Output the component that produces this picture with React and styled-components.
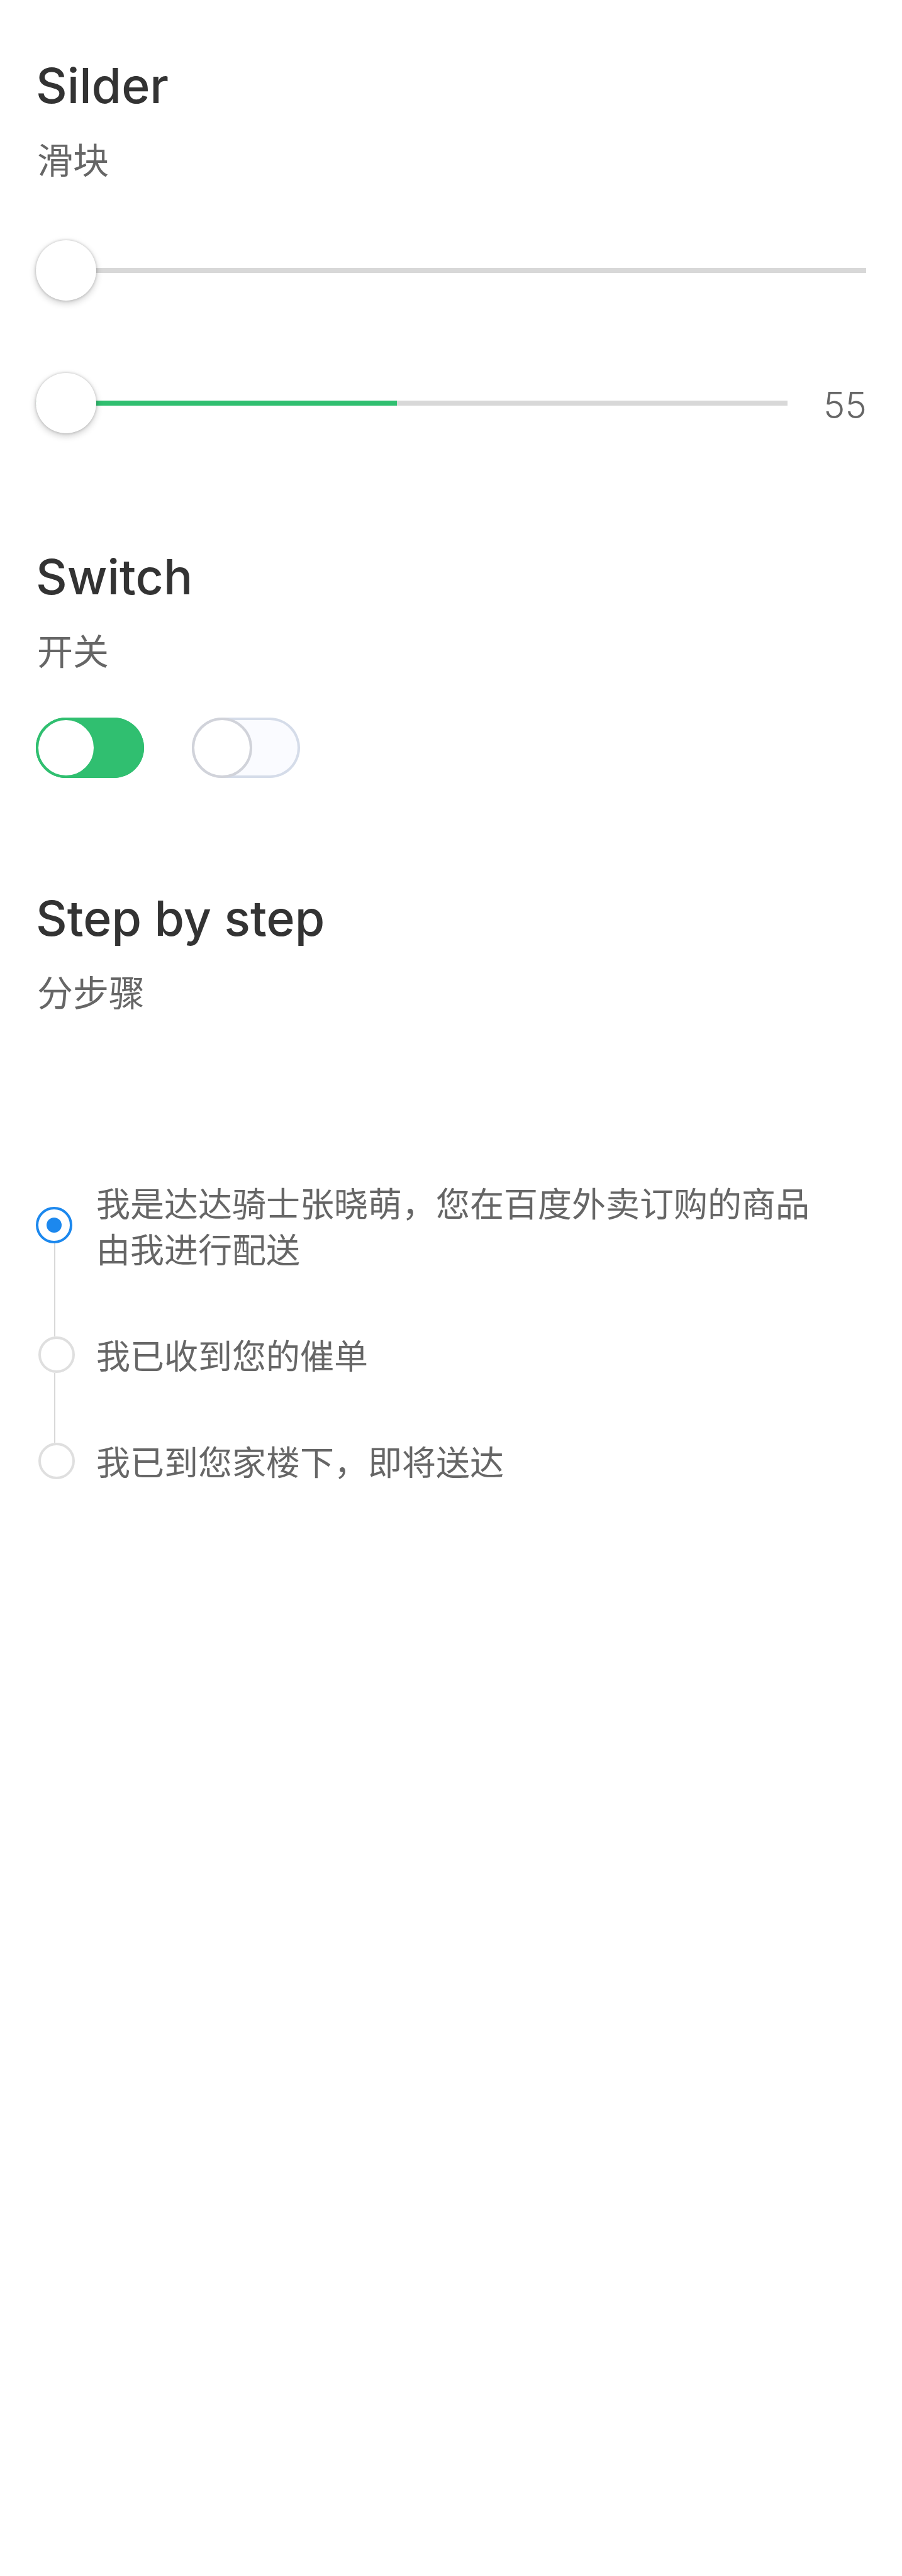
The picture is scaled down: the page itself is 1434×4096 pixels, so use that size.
import React, { useState } from "react";
import styled, { createGlobalStyle } from "styled-components";

const GlobalStyle = createGlobalStyle`
  *, *::before, *::after { box-sizing: border-box; }
  body {
    margin: 0;
    background: #fff;
    color: #666;
    font-family: Inter, "Noto Sans CJK SC", sans-serif;
  }
`;

const Page = styled.main`
  display: flex;
  flex-direction: column;
  min-height: 100vh;
  padding: 88px 57px;
`;

const Section = styled.section`
  margin-bottom: ${(p) => p.$space || 0}px;
`;

const Title = styled.h2`
  margin: 0 0 27px;
  color: #333;
  font-size: 77px;
  font-weight: 500;
  line-height: 96px;
`;

const Subtitle = styled.p`
  margin: 0;
  padding-left: 2px;
  font-family: "Noto Sans CJK SC", sans-serif;
  font-size: 57px;
  font-weight: 400;
  line-height: 80px;
`;

const Sliders = styled.div`
  display: grid;
  gap: 115px;
  margin-top: 91px;
`;

const SliderRow = styled.div`
  display: flex;
  align-items: center;
  gap: 57px;
`;

const Range = styled.input`
  appearance: none;
  flex: 1;
  min-width: 0;
  height: 96px;
  margin: 0;
  background: linear-gradient(to right, #30bf70 ${(p) => p.$fill}%, #d8d8d8 ${(p) => p.$fill}%)
    center / 100% 8px no-repeat;
  cursor: pointer;

  &::-webkit-slider-thumb {
    appearance: none;
    width: 96px;
    height: 96px;
    border: 0;
    border-radius: 50%;
    background: #fff;
    box-shadow: 0 0 4px rgba(0, 0, 0, 0.22), 0 4px 12px rgba(0, 0, 0, 0.2);
  }
`;

const Value = styled.output`
  width: 68px;
  padding-top: 6px;
  font-size: 58px;
  font-weight: 300;
  line-height: 80px;
  text-align: right;
`;

const Switches = styled.div`
  display: flex;
  gap: 76px;
  margin-top: 69px;
`;

const Toggle = styled.button`
  display: flex;
  width: 172px;
  height: 96px;
  padding: 0;
  border: 0;
  border-radius: 48px;
  background: ${(p) => (p.$on ? "#30bf70" : "#fafbff")};
  box-shadow: inset 0 0 0 4px ${(p) => (p.$on ? "#30bf70" : "#d5dce9")};
  cursor: pointer;
`;

const Knob = styled.span`
  width: 96px;
  height: 96px;
  border: 4px solid ${(p) => (p.$on ? "#30bf70" : "#d1d3da")};
  border-radius: 50%;
  background: #fff;
`;

const Steps = styled.ol`
  margin: 212px 0 0;
  padding: 0;
  list-style: none;
`;

const Step = styled.li`
  display: flex;
  gap: 34px;
`;

const Rail = styled.div`
  display: flex;
  flex-direction: column;
  width: 62px;
`;

const Line = styled.span`
  flex: 1;
  width: 2px;
  margin-left: 29px;
  background: ${(p) => (p.$hidden ? "transparent" : "#d8d8d8")};
`;

const Marker = styled.span`
  display: grid;
  place-items: center;
  align-self: ${(p) => (p.$active ? "flex-start" : "flex-end")};
  width: 58px;
  height: 58px;
  border: 4px solid ${(p) => (p.$active ? "#1c88ee" : "#dfdfdf")};
  border-radius: 50%;
`;

const Dot = styled.span`
  width: 24px;
  height: 24px;
  border-radius: 50%;
  background: #1c88ee;
`;

const StepText = styled.p`
  flex: 1;
  margin: 0;
  padding: 48px 57px 48px 0;
  font-family: "Noto Sans CJK SC", sans-serif;
  font-size: 54px;
  font-weight: 400;
  line-height: 73px;
`;

const STEPS = [
  "我是达达骑士张晓萌，您在百度外卖订购的商品由我进行配送",
  "我已收到您的催单",
  "我已到您家楼下，即将送达",
];

function Switch({ label, initial }) {
  const [checked, setChecked] = useState(initial);
  return (
    <Toggle
      type="button"
      role="switch"
      aria-checked={checked}
      aria-label={label}
      $on={checked}
      onClick={() => setChecked(!checked)}
    >
      <Knob $on={checked} />
    </Toggle>
  );
}

export default function App() {
  return (
    <>
      <GlobalStyle />
      <Page lang="zh-CN">
        <Section $space={180}>
          <Title>Silder</Title>
          <Subtitle>滑块</Subtitle>
          <Sliders>
            <SliderRow>
              <Range type="range" aria-label="滑块" defaultValue={0} $fill={0} />
            </SliderRow>
            <SliderRow>
              <Range id="amount" type="range" aria-label="数值" defaultValue={0} $fill={48} />
              <Value htmlFor="amount">55</Value>
            </SliderRow>
          </Sliders>
        </Section>

        <Section $space={175}>
          <Title>Switch</Title>
          <Subtitle>开关</Subtitle>
          <Switches>
            <Switch label="开" initial />
            <Switch label="关" initial={false} />
          </Switches>
        </Section>

        <Section>
          <Title>Step by step</Title>
          <Subtitle>分步骤</Subtitle>
          <Steps>
            {STEPS.map((text, i) => (
              <Step key={text}>
                <Rail>
                  <Line $hidden={i === 0} />
                  <Marker $active={i === 0}>{i === 0 && <Dot />}</Marker>
                  <Line $hidden={i === STEPS.length - 1} />
                </Rail>
                <StepText>{text}</StepText>
              </Step>
            ))}
          </Steps>
        </Section>
      </Page>
    </>
  );
}
